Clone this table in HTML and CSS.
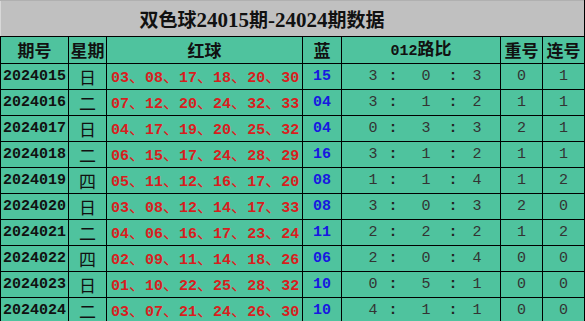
FILE: index.html
```html
<!DOCTYPE html>
<html lang="zh">
<head>
<meta charset="utf-8">
<link rel="stylesheet" href="styles.css">
</head>
<body>
<table class="tbl">
  <colgroup>
    <col class="c-no"><col class="c-day"><col class="c-red"><col class="c-blue"><col class="c-ratio"><col class="c-rep"><col class="c-con">
  </colgroup>
  <tr class="title-row"><td colspan="7" class="title">双色球<b>24015</b>期<b>-24024</b>期数据</td></tr>
  <tr class="head">
    <th>期号</th><th>星期</th><th>红球</th><th>蓝</th><th><b>012</b>路比</th><th>重号</th><th>连号</th>
  </tr>
  <tr><td class="no">2024015</td><td class="day">日</td><td class="red">03<i>、</i>08<i>、</i>17<i>、</i>18<i>、</i>20<i>、</i>30</td><td class="blue">15</td><td class="ratio"><div class="rt"><span>3</span><span class="col">:</span><span>0</span><span class="col">:</span><span>3</span></div></td><td class="num">0</td><td class="num">1</td></tr>
  <tr><td class="no">2024016</td><td class="day">二</td><td class="red">07<i>、</i>12<i>、</i>20<i>、</i>24<i>、</i>32<i>、</i>33</td><td class="blue">04</td><td class="ratio"><div class="rt"><span>3</span><span class="col">:</span><span>1</span><span class="col">:</span><span>2</span></div></td><td class="num">1</td><td class="num">1</td></tr>
  <tr><td class="no">2024017</td><td class="day">日</td><td class="red">04<i>、</i>17<i>、</i>19<i>、</i>20<i>、</i>25<i>、</i>32</td><td class="blue">04</td><td class="ratio"><div class="rt"><span>0</span><span class="col">:</span><span>3</span><span class="col">:</span><span>3</span></div></td><td class="num">2</td><td class="num">1</td></tr>
  <tr><td class="no">2024018</td><td class="day">二</td><td class="red">06<i>、</i>15<i>、</i>17<i>、</i>24<i>、</i>28<i>、</i>29</td><td class="blue">16</td><td class="ratio"><div class="rt"><span>3</span><span class="col">:</span><span>1</span><span class="col">:</span><span>2</span></div></td><td class="num">1</td><td class="num">1</td></tr>
  <tr><td class="no">2024019</td><td class="day">四</td><td class="red">05<i>、</i>11<i>、</i>12<i>、</i>16<i>、</i>17<i>、</i>20</td><td class="blue">08</td><td class="ratio"><div class="rt"><span>1</span><span class="col">:</span><span>1</span><span class="col">:</span><span>4</span></div></td><td class="num">1</td><td class="num">2</td></tr>
  <tr><td class="no">2024020</td><td class="day">日</td><td class="red">03<i>、</i>08<i>、</i>12<i>、</i>14<i>、</i>17<i>、</i>33</td><td class="blue">08</td><td class="ratio"><div class="rt"><span>3</span><span class="col">:</span><span>0</span><span class="col">:</span><span>3</span></div></td><td class="num">2</td><td class="num">0</td></tr>
  <tr><td class="no">2024021</td><td class="day">二</td><td class="red">04<i>、</i>06<i>、</i>16<i>、</i>17<i>、</i>23<i>、</i>24</td><td class="blue">11</td><td class="ratio"><div class="rt"><span>2</span><span class="col">:</span><span>2</span><span class="col">:</span><span>2</span></div></td><td class="num">1</td><td class="num">2</td></tr>
  <tr><td class="no">2024022</td><td class="day">四</td><td class="red">02<i>、</i>09<i>、</i>11<i>、</i>14<i>、</i>18<i>、</i>26</td><td class="blue">06</td><td class="ratio"><div class="rt"><span>2</span><span class="col">:</span><span>0</span><span class="col">:</span><span>4</span></div></td><td class="num">0</td><td class="num">0</td></tr>
  <tr><td class="no">2024023</td><td class="day">日</td><td class="red">01<i>、</i>10<i>、</i>22<i>、</i>25<i>、</i>28<i>、</i>32</td><td class="blue">10</td><td class="ratio"><div class="rt"><span>0</span><span class="col">:</span><span>5</span><span class="col">:</span><span>1</span></div></td><td class="num">0</td><td class="num">0</td></tr>
  <tr><td class="no">2024024</td><td class="day">二</td><td class="red">03<i>、</i>07<i>、</i>21<i>、</i>24<i>、</i>26<i>、</i>30</td><td class="blue">10</td><td class="ratio"><div class="rt"><span>4</span><span class="col">:</span><span>1</span><span class="col">:</span><span>1</span></div></td><td class="num">0</td><td class="num">0</td></tr>
</table>
</body>
</html>
```
FILE: styles.css
```css
html, body {
  margin: 0;
  padding: 0;
  background: #ffffff;
}
.tbl {
  width: 585px;
  border-collapse: collapse;
  table-layout: fixed;
  font-family: "Liberation Mono", "Noto Sans CJK SC", monospace;
  background: #4fc39e;
}
.c-no { width: 68px; }
.c-day { width: 38px; }
.c-red { width: 196px; }
.c-blue { width: 39px; }
.c-ratio { width: 159px; }
.c-rep { width: 42px; }
.c-con { width: 42px; }

.tbl td, .tbl th {
  border: 1px solid #000;
  padding: 0;
  text-align: center;
  white-space: nowrap;
}
.title-row td {
  height: 35px;
  background: #c0c0c0;
  border-top-color: #b0b0b0;
  border-left-color: #d8d8d8;
}
.title {
  font-family: "Noto Sans CJK SC", sans-serif;
  font-weight: bold;
  font-size: 19px;
  color: #111;
  padding-right: 61px !important;
}
.title b {
  font-family: "Liberation Serif", serif;
  font-size: 21px;
  font-weight: bold;
}
.head th {
  height: 23px;
  font-family: "Noto Sans CJK SC", sans-serif;
  font-weight: bold;
  font-size: 17px;
  color: #111;
  line-height: 22px;
}
.head th b {
  font-family: "Liberation Mono", monospace;
  font-size: 15px;
}
.tbl tr:not(.title-row):not(.head) td {
  height: 25px;
  line-height: 20px;
}
.tbl tr:first-child td { border-left-color: #d8d8d8; }
.no {
  font-weight: bold;
  font-size: 15px;
  color: #111;
}
.day {
  font-family: "Noto Sans CJK SC", sans-serif;
  font-size: 17px;
  color: #111;
}
.red {
  font-weight: bold;
  font-size: 15px;
  color: #d81e1e;
  text-align: left !important;
  padding-left: 4px !important;
}
.red i {
  font-style: normal;
  font-family: "Noto Sans CJK SC", sans-serif;
  font-size: 16px;
  font-weight: normal;
}
.blue {
  font-weight: bold;
  font-size: 15px;
  color: #1818e0;
}
.num {
  font-size: 15px;
  color: #333;
}
.rt {
  display: grid;
  grid-template-columns: 18px 22px 44px 10px 38px;
  padding-left: 22px;
  font-size: 15px;
  color: #333;
}
.rt span { text-align: center; }
.rt .col { font-weight: bold; color: #222; }
```
